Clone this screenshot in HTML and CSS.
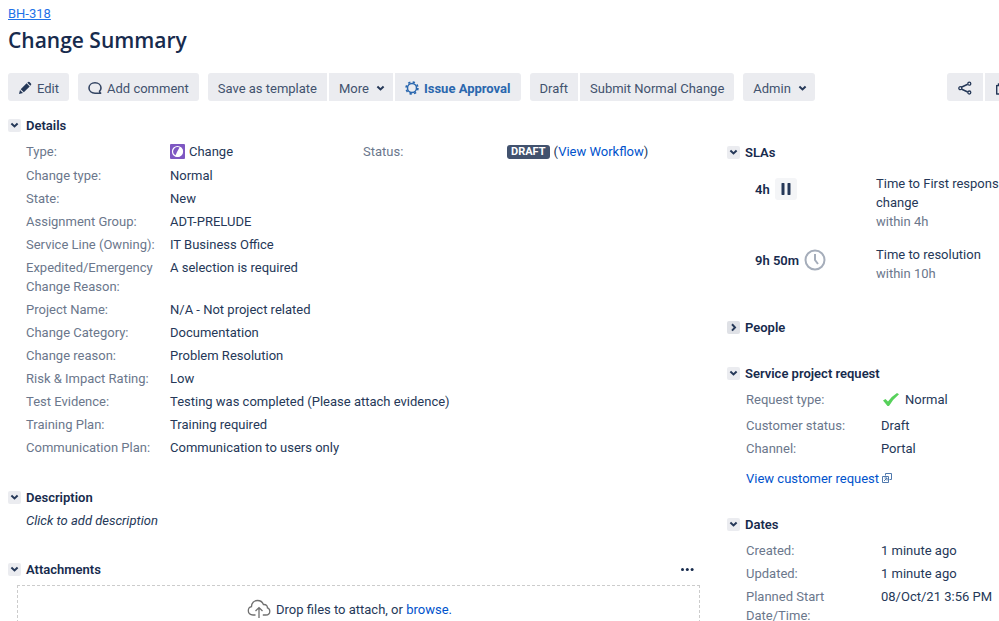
FILE: index.html
```html
<!DOCTYPE html>
<html lang="en">
<head>
    <meta charset="UTF-8">
    <title>BH-318 Change Summary</title>
    <link rel="stylesheet" href="styles.css">
</head>
<body>
    <svg class="sprite" aria-hidden="true">
        <symbol id="down" viewBox="0 0 13 13"><path d="M3.4 4.600l3.100 2.900 3.100-2.900" fill="none" stroke="currentColor" stroke-width="2"/></symbol>
        <symbol id="right" viewBox="0 0 13 13"><path d="M5 3.2l3 3.2-3 3.2" fill="none" stroke="currentColor" stroke-width="2"/></symbol>
    </svg>

    <div class="header">
        <a class="issue-key" href="#">BH-318</a>
        <h1>Change Summary</h1>
    </div>

    <div class="toolbar">
        <div class="group">
            <button type="button"><svg width="14" height="14" viewBox="0 0 14 14"><path d="M1 13l1-4 3 3zM2.7 8.2L8.6 2.300l3.100 3.100-5.900 5.900zM9.300 1.700l.8-.7q.7-.5 1.400.1l1.500 1.500q.6.700 0 1.400l-.7.700z" fill="#253858"/></svg>Edit</button>
        </div>
        <div class="group">
            <button type="button"><svg width="14" height="14" viewBox="0 0 14 14"><path d="M11.500 10.300C12.500 9.300 13 8.200 13 7c0-3-2.600-5.200-6-5.200S1 4 1 7s2.600 5.200 6 5.200h5.600q-1-.8-1.100-1.900z" fill="none" stroke="#344563" stroke-width="1.600" stroke-linejoin="round"/></svg>Add comment</button>
        </div>
        <div class="group">
            <button type="button">Save as template</button>
            <button type="button">More<svg class="caret" width="13" height="13"><use href="#down"/></svg></button>
            <button type="button" class="approval"><svg width="14" height="14" viewBox="0 0 14 14"><circle cx="7" cy="7" r="4.500" fill="none" stroke="#2a67ae" stroke-width="1.500"/><circle cx="7" cy="7" r="5.900" fill="none" stroke="#2a67ae" stroke-width="1.700" stroke-dasharray="2.300 2.334"/></svg>Issue Approval</button>
        </div>
        <div class="group">
            <button type="button">Draft</button>
            <button type="button">Submit Normal Change</button>
        </div>
        <div class="group">
            <button type="button">Admin<svg class="caret" width="13" height="13"><use href="#down"/></svg></button>
        </div>
        <div class="group tools">
            <button type="button" aria-label="Share"><svg width="14" height="14" viewBox="0 0 14 14"><path d="M3.300 6.300l6.400-3M3.300 8l6.400 3" stroke="#253858" stroke-width="1.500"/><g fill="#ebecf0" stroke="#253858" stroke-width="1.300"><circle cx="2.300" cy="7.200" r="1.500"/><circle cx="11.300" cy="2.700" r="1.500"/><circle cx="11.300" cy="11.500" r="1.500"/></g></svg></button>
            <button type="button" aria-label="Export"><svg width="14" height="14" viewBox="0 0 14 14"><path d="M4.500 4.500H1.200q-.6 0-.6.600V12.400q0 .6.600.6h11.600q.6 0 .6-.6V5.100q0-.6-.6-.6H9.500M2 3.500L7 .5l5 3M7 1v8" fill="none" stroke="#253858" stroke-width="1.600"/></svg></button>
        </div>
    </div>

    <div class="content">
        <div class="main">
            <div class="section details">
                <h2><button type="button" class="toggle" aria-label="Toggle Details"><svg width="13" height="13"><use href="#down"/></svg></button>Details</h2>
                <div class="columns">
                    <dl class="fields">
                        <dt>Type:</dt>
                        <dd class="type"><svg width="15" height="15" viewBox="0 0 15 15"><rect width="15" height="15" rx="1" fill="#7e57c2"/><circle cx="7.500" cy="7.500" r="5" fill="none" stroke="#fff" stroke-width="1.200"/><path d="M9.800 2.900A5.100 5.100 0 1 1 5.200 12.100L7 8z" fill="#fff"/></svg>Change</dd>
                        <dt>Change type:</dt>
                        <dd>Normal</dd>
                        <dt>State:</dt>
                        <dd>New</dd>
                        <dt>Assignment Group:</dt>
                        <dd>ADT-PRELUDE</dd>
                        <dt>Service Line (Owning):</dt>
                        <dd>IT Business Office</dd>
                        <dt>Expedited/Emergency<br>Change Reason:</dt>
                        <dd>A selection is required</dd>
                        <dt>Project Name:</dt>
                        <dd>N/A - Not project related</dd>
                        <dt>Change Category:</dt>
                        <dd>Documentation</dd>
                        <dt>Change reason:</dt>
                        <dd>Problem Resolution</dd>
                        <dt>Risk &amp; Impact Rating:</dt>
                        <dd>Low</dd>
                        <dt>Test Evidence:</dt>
                        <dd>Testing was completed (Please attach evidence)</dd>
                        <dt>Training Plan:</dt>
                        <dd>Training required</dd>
                        <dt>Communication Plan:</dt>
                        <dd>Communication to users only</dd>
                    </dl>
                    <dl class="fields">
                        <dt>Status:</dt>
                        <dd class="status"><span class="lozenge">DRAFT</span><span>(<a href="#">View Workflow</a>)</span></dd>
                    </dl>
                </div>
            </div>

            <div class="section description">
                <h2><button type="button" class="toggle" aria-label="Toggle Description"><svg width="13" height="13"><use href="#down"/></svg></button>Description</h2>
                <p>Click to add description</p>
            </div>

            <div class="section attachments">
                <h2><button type="button" class="toggle" aria-label="Toggle Attachments"><svg width="13" height="13"><use href="#down"/></svg></button>Attachments
                    <button type="button" class="dots" aria-label="Attachment options"><svg width="13" height="3" viewBox="0 0 13 3"><g fill="#172b4d"><circle cx="1.500" cy="1.500" r="1.500"/><circle cx="6.300" cy="1.500" r="1.500"/><circle cx="11.100" cy="1.500" r="1.500"/></g></svg></button>
                </h2>
                <div class="dropzone">
                    <svg width="24" height="20" viewBox="0 0 24 20"><path d="M8.500 16H6C3 16 1.300 14.100 1.300 11.700c0-2 1.300-3.600 3.200-4C4.400 4 7 1.500 10.500 1.500c2.700 0 5 1.500 5.900 4 3.200-.2 4.100 1.700 4 3.300 1.500.4 2.400 1.700 2.400 3.400 0 2.200-1.500 3.800-4 3.800h-3M12 19V9M8.500 12L12 8.600l3.500 3.400" fill="none" stroke="#707070" stroke-width="1.300"/></svg>
                    <span>Drop files to attach, or <a href="#">browse.</a></span>
                </div>
            </div>
        </div>

        <div class="side">
            <div class="section slas">
                <h2><button type="button" class="toggle" aria-label="Toggle SLAs"><svg width="13" height="13"><use href="#down"/></svg></button>SLAs</h2>
                <div class="sla">
                    <div class="time">4h <span class="paused"><svg width="12" height="12" viewBox="0 0 12 12"><path d="M3 1v10M9 1v10" stroke="#253858" stroke-width="3" stroke-linecap="round"/></svg></span></div>
                    <div class="goal">Time to First response<br>change<br><span class="within">within 4h</span></div>
                </div>
                <div class="sla">
                    <div class="time">9h 50m <svg width="22" height="22" viewBox="0 0 22 22"><g fill="none" stroke="#a5adba" stroke-width="2"><circle cx="11" cy="11" r="9.500"/><path d="M11 5v6l3 4"/></g></svg></div>
                    <div class="goal">Time to resolution<br><span class="within">within 10h</span></div>
                </div>
            </div>

            <div class="section people">
                <h2><button type="button" class="toggle closed" aria-label="Toggle People"><svg width="13" height="13"><use href="#right"/></svg></button>People</h2>
            </div>

            <div class="section request">
                <h2><button type="button" class="toggle" aria-label="Toggle Service project request"><svg width="13" height="13"><use href="#down"/></svg></button>Service project request</h2>
                <dl class="fields">
                    <dt>Request type:</dt>
                    <dd class="request-type"><svg width="16" height="13" viewBox="0 0 16 13"><path d="M0 7.500l2.500-1.500 2.500 2.500Q9 3 14 0l2 1.200Q10 6 6 13H4.500z" fill="#57d15b"/></svg>Normal</dd>
                    <dt>Customer status:</dt>
                    <dd>Draft</dd>
                    <dt>Channel:</dt>
                    <dd>Portal</dd>
                </dl>
                <a class="customer-link" href="#">View customer request <svg width="10" height="10" viewBox="0 0 10 10"><g fill="none" stroke="#4f78ad"><path d="M3.500 2.500v-2h6v6h-2M.5 3.500h6v6h-6z"/><path d="M2 8l3-3M2.500 5H5v2.500"/></g></svg></a>
            </div>

            <div class="section dates">
                <h2><button type="button" class="toggle" aria-label="Toggle Dates"><svg width="13" height="13"><use href="#down"/></svg></button>Dates</h2>
                <dl class="fields">
                    <dt>Created:</dt>
                    <dd>1 minute ago</dd>
                    <dt>Updated:</dt>
                    <dd>1 minute ago</dd>
                    <dt>Planned Start<br>Date/Time:</dt>
                    <dd>08/Oct/21 3:56 PM</dd>
                </dl>
            </div>
        </div>
    </div>
</body>
</html>
```
FILE: styles.css
```css
body {
    margin: 0;
    padding: 4px 0 0 8px;
    overflow: hidden;
    background-color: #ffffff;
    color: #253858;
    font-family: Roboto, "Open Sans", sans-serif;
    font-size: 13px;
    line-height: 19px;
}
a {
    color: #0052cc;
    text-decoration: none;
}
button {
    font: inherit;
    color: inherit;
    border: 0;
    padding: 0;
    cursor: pointer;
}
svg {
    flex-shrink: 0;
}
.sprite {
    display: none;
}
.issue-key {
    display: block;
    color: #1f72e8;
    text-decoration: underline;
}
h1 {
    margin: 3px 0 19px;
    color: #172b4d;
    font-family: "Open Sans", sans-serif;
    font-size: 21px;
    font-weight: 600;
    line-height: 28px;
}

/* toolbar */
.toolbar {
    display: flex;
    gap: 9px;
    overflow: hidden;
}
.group {
    display: flex;
    flex-shrink: 0;
    gap: 2px;
    border-radius: 3px;
    overflow: hidden;
}
.group button {
    display: flex;
    align-items: center;
    gap: 5px;
    height: 28px;
    padding: 2px 10px 0;
    background-color: #ebecf0;
    color: #42526e;
    white-space: nowrap;
}
.group .approval {
    color: #2a67ae;
    font-weight: 700;
}
.caret {
    color: #253858;
    margin-right: -4px;
}
/* last button runs past the edge of the window */
.tools {
    margin: 0 -22px 0 auto;
}
.tools button {
    padding: 2px 11px 0;
}

.content {
    display: grid;
    grid-template-columns: 692fr 272fr;
    gap: 27px;
}
.main, .side {
    min-width: 0;
}
.side {
    padding-top: 42px;
    white-space: nowrap;
}
.section h2 {
    display: flex;
    align-items: center;
    gap: 5px;
    margin: 0;
    color: #172b4d;
    font-size: 13px;
    font-weight: 600;
    line-height: 19px;
}
.toggle {
    display: flex;
    border-radius: 2px;
    background-color: #ebecf0;
    color: #253858;
}
.closed {
    background-color: #dfe1e6;
}
.dots {
    display: flex;
    margin-left: auto;
    padding: 6px;
    background: none;
}

/* label / value pairs */
.fields {
    display: grid;
    grid-template-columns: 144px 1fr;
    row-gap: 4px;
    align-content: start;
    margin: 0;
}
.fields dt {
    color: #6b778c;
}
.fields dd {
    margin: 0;
    white-space: nowrap;
}
.fields .type, .fields .status, .fields .request-type {
    display: flex;
    align-items: center;
    gap: 4px;
}
.side .fields {
    grid-template-columns: 135px 1fr;
    padding-left: 19px;
}
.details {
    padding-top: 15px;
}
.columns {
    display: grid;
    grid-template-columns: minmax(0, 1fr) minmax(0, 1fr);
    padding: 7px 0 0 18px;
}
.columns .type {
    padding-bottom: 1px;
}
.lozenge {
    padding: 0 4px;
    border-radius: 3px;
    background-color: #42526e;
    color: #ffffff;
    font-size: 11px;
    font-weight: 700;
    line-height: 14px;
}
.description {
    padding-top: 31px;
}
.description p {
    margin: 4px 0 0 18px;
    font-style: italic;
}
.attachments {
    padding-top: 30px;
}
.dropzone {
    display: flex;
    align-items: center;
    justify-content: center;
    gap: 5px;
    height: 46px;
    margin: 6px 0 0 9px;
    padding-right: 18px;
    border: 1px dashed #cccccc;
}

/* side column */
.sla {
    display: grid;
    grid-template-columns: 121px 1fr;
    padding: 11px 0 3px 28px;
}
.slas h2 {
    margin-bottom: 1px;
}
.time {
    display: flex;
    align-items: center;
    gap: 5px;
    height: 30px;
    color: #172b4d;
    font-weight: 600;
}
.paused {
    display: flex;
    padding: 5px;
    border-radius: 3px;
    background-color: #f4f5f7;
}
.within {
    color: #6b778c;
}
.people {
    padding-top: 32px;
}
.request {
    padding-top: 27px;
}
.request .fields {
    padding-top: 7px;
}
.request .request-type {
    padding: 0 0 3px 2px;
    gap: 6px;
}
.customer-link {
    display: block;
    margin: 11px 0 0 19px;
}
.dates {
    padding-top: 27px;
}
.dates .fields {
    padding-top: 7px;
}
```
